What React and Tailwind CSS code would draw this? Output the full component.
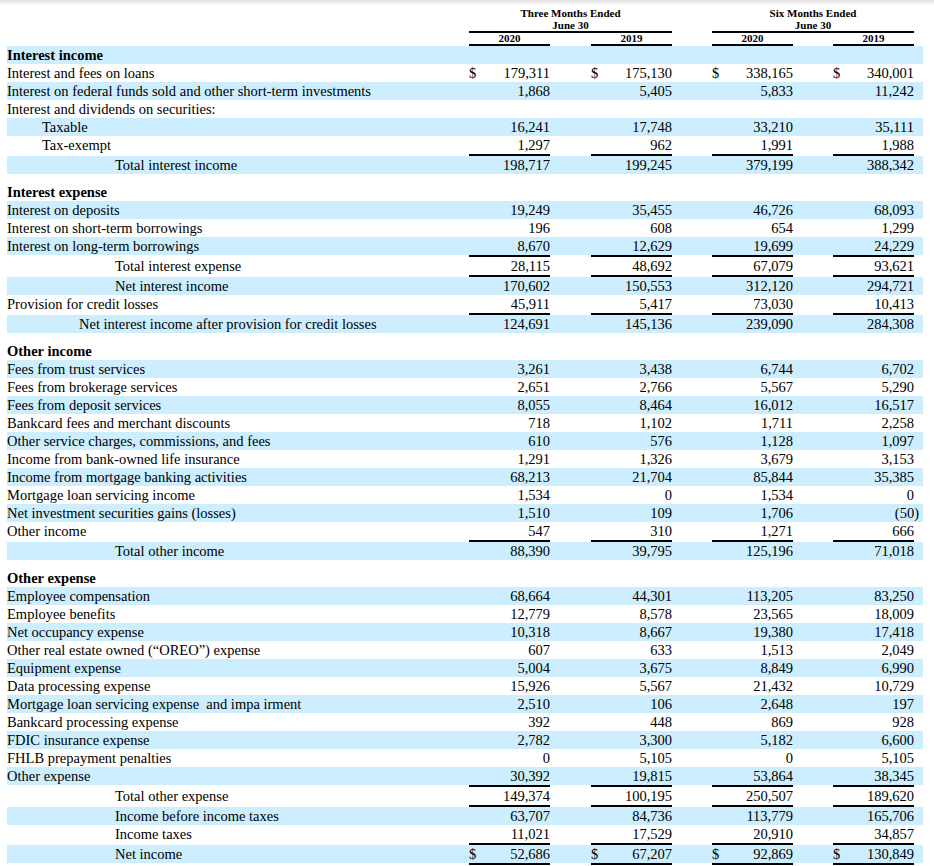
import React from 'react';

const indentCls = ['pl-0', 'pl-[35px]', 'pl-[72px]', 'pl-[108px]'];
const gapCls = ['', 'ml-[41px]', 'ml-[40px]', 'ml-[40px]'];

// one entry per line of the statement
const lines = [
  { label: 'Interest income', bold: true, shaded: true },
  { label: 'Interest and fees on loans', vals: ['179,311', '175,130', '338,165', '340,001'], dollar: true },
  { label: 'Interest on federal funds sold and other short-term investments', vals: ['1,868', '5,405', '5,833', '11,242'], shaded: true },
  { label: 'Interest and dividends on securities:' },
  { label: 'Taxable', indent: 1, vals: ['16,241', '17,748', '33,210', '35,111'], shaded: true },
  { label: 'Tax-exempt', indent: 1, vals: ['1,297', '962', '1,991', '1,988'] },
  { rule: true },
  { label: 'Total interest income', indent: 3, vals: ['198,717', '199,245', '379,199', '388,342'], shaded: true },
  { gap: true },
  { label: 'Interest expense', bold: true },
  { label: 'Interest on deposits', vals: ['19,249', '35,455', '46,726', '68,093'], shaded: true },
  { label: 'Interest on short-term borrowings', vals: ['196', '608', '654', '1,299'] },
  { label: 'Interest on long-term borrowings', vals: ['8,670', '12,629', '19,699', '24,229'], shaded: true },
  { rule: true },
  { label: 'Total interest expense', indent: 3, vals: ['28,115', '48,692', '67,079', '93,621'] },
  { rule: true },
  { label: 'Net interest income', indent: 3, vals: ['170,602', '150,553', '312,120', '294,721'], shaded: true },
  { label: 'Provision for credit losses', vals: ['45,911', '5,417', '73,030', '10,413'] },
  { rule: true },
  { label: 'Net interest income after provision for credit losses', indent: 2, vals: ['124,691', '145,136', '239,090', '284,308'], shaded: true },
  { gap: true },
  { label: 'Other income', bold: true },
  { label: 'Fees from trust services', vals: ['3,261', '3,438', '6,744', '6,702'], shaded: true },
  { label: 'Fees from brokerage services', vals: ['2,651', '2,766', '5,567', '5,290'] },
  { label: 'Fees from deposit services', vals: ['8,055', '8,464', '16,012', '16,517'], shaded: true },
  { label: 'Bankcard fees and merchant discounts', vals: ['718', '1,102', '1,711', '2,258'] },
  { label: 'Other service charges, commissions, and fees', vals: ['610', '576', '1,128', '1,097'], shaded: true },
  { label: 'Income from bank-owned life insurance', vals: ['1,291', '1,326', '3,679', '3,153'] },
  { label: 'Income from mortgage banking activities', vals: ['68,213', '21,704', '85,844', '35,385'], shaded: true },
  { label: 'Mortgage loan servicing income', vals: ['1,534', '0', '1,534', '0'] },
  { label: 'Net investment securities gains (losses)', vals: ['1,510', '109', '1,706', '(50)'], shaded: true },
  { label: 'Other income', vals: ['547', '310', '1,271', '666'] },
  { rule: true },
  { label: 'Total other income', indent: 3, vals: ['88,390', '39,795', '125,196', '71,018'], shaded: true },
  { gap: true },
  { label: 'Other expense', bold: true },
  { label: 'Employee compensation', vals: ['68,664', '44,301', '113,205', '83,250'], shaded: true },
  { label: 'Employee benefits', vals: ['12,779', '8,578', '23,565', '18,009'] },
  { label: 'Net occupancy expense', vals: ['10,318', '8,667', '19,380', '17,418'], shaded: true },
  { label: 'Other real estate owned (\u201cOREO\u201d) expense', vals: ['607', '633', '1,513', '2,049'] },
  { label: 'Equipment expense', vals: ['5,004', '3,675', '8,849', '6,990'], shaded: true },
  { label: 'Data processing expense', vals: ['15,926', '5,567', '21,432', '10,729'] },
  { label: 'Mortgage loan servicing expense  and impa irment', vals: ['2,510', '106', '2,648', '197'], shaded: true },
  { label: 'Bankcard processing expense', vals: ['392', '448', '869', '928'] },
  { label: 'FDIC insurance expense', vals: ['2,782', '3,300', '5,182', '6,600'], shaded: true },
  { label: 'FHLB prepayment penalties', vals: ['0', '5,105', '0', '5,105'] },
  { label: 'Other expense', vals: ['30,392', '19,815', '53,864', '38,345'], shaded: true },
  { rule: true },
  { label: 'Total other expense', indent: 3, vals: ['149,374', '100,195', '250,507', '189,620'] },
  { rule: true },
  { label: 'Income before income taxes', indent: 3, vals: ['63,707', '84,736', '113,779', '165,706'], shaded: true },
  { label: 'Income taxes', indent: 3, vals: ['11,021', '17,529', '20,910', '34,857'] },
  { rule: true },
  { label: 'Net income', indent: 3, vals: ['52,686', '67,207', '92,869', '130,849'], shaded: true, dollar: true },
  { double: true },
];

const Row = ({ label, vals, indent = 0, bold, shaded, dollar }) => (
  <div className={`flex h-[18px] leading-[18px] ${shaded ? 'bg-[#cceeff]' : ''}`}>
    <div className={`w-[462px] whitespace-pre ${indentCls[indent]} ${bold ? 'font-bold' : ''}`}>{label}</div>
    {vals &&
      vals.map((v, i) => (
        <div key={i} className={`w-[81px] flex justify-between ${gapCls[i]}`}>
          <span>{dollar ? '$' : ''}</span>
          <span className={v.startsWith('(') ? 'mr-[-5px]' : ''}>{v}</span>
        </div>
      ))}
  </div>
);

const Rule = ({ double }) => (
  <div className="flex">
    <div className="w-[462px]" />
    {[0, 1, 2, 3].map((i) => (
      <div
        key={i}
        className={`w-[81px] ${gapCls[i]} ${double ? 'h-[5px] border-y-2 border-black' : 'h-[2px] bg-black'}`}
      />
    ))}
  </div>
);

const PeriodHeader = ({ title, wide }) => (
  <div className={`${wide ? 'w-[203px]' : 'w-[202px] ml-[40px]'} text-center`}>
    <div>{title}</div>
    <div>June 30</div>
    <div className="flex justify-between border-t-2 border-black">
      <div className="w-[81px] border-b-2 border-black leading-[11px]">2020</div>
      <div className="w-[81px] border-b-2 border-black leading-[11px]">2019</div>
    </div>
  </div>
);

export default function App() {
  return (
    <div className="relative w-[934px] h-[866px] overflow-hidden bg-white text-black font-['Liberation_Serif','Times_New_Roman',serif]">
      {/* viewer shadow along the top edge */}
      <div className="absolute top-0 inset-x-0 h-[6px] bg-linear-to-b from-[#e2e2e2] to-transparent" />

      <div className="pl-[7px] w-[923px]">
        <div className="flex pt-[7px] text-[11px] font-bold leading-[12px]">
          <div className="w-[462px]" />
          <PeriodHeader title="Three Months Ended" wide />
          <PeriodHeader title="Six Months Ended" />
        </div>

        <div className="text-[14.5px]">
          {lines.map((l, i) => {
            if (l.gap) return <div key={i} className="h-[9px]" />;
            if (l.rule) return <Rule key={i} />;
            if (l.double) return <Rule key={i} double />;
            return <Row key={i} {...l} />;
          })}
        </div>
      </div>
    </div>
  );
}
